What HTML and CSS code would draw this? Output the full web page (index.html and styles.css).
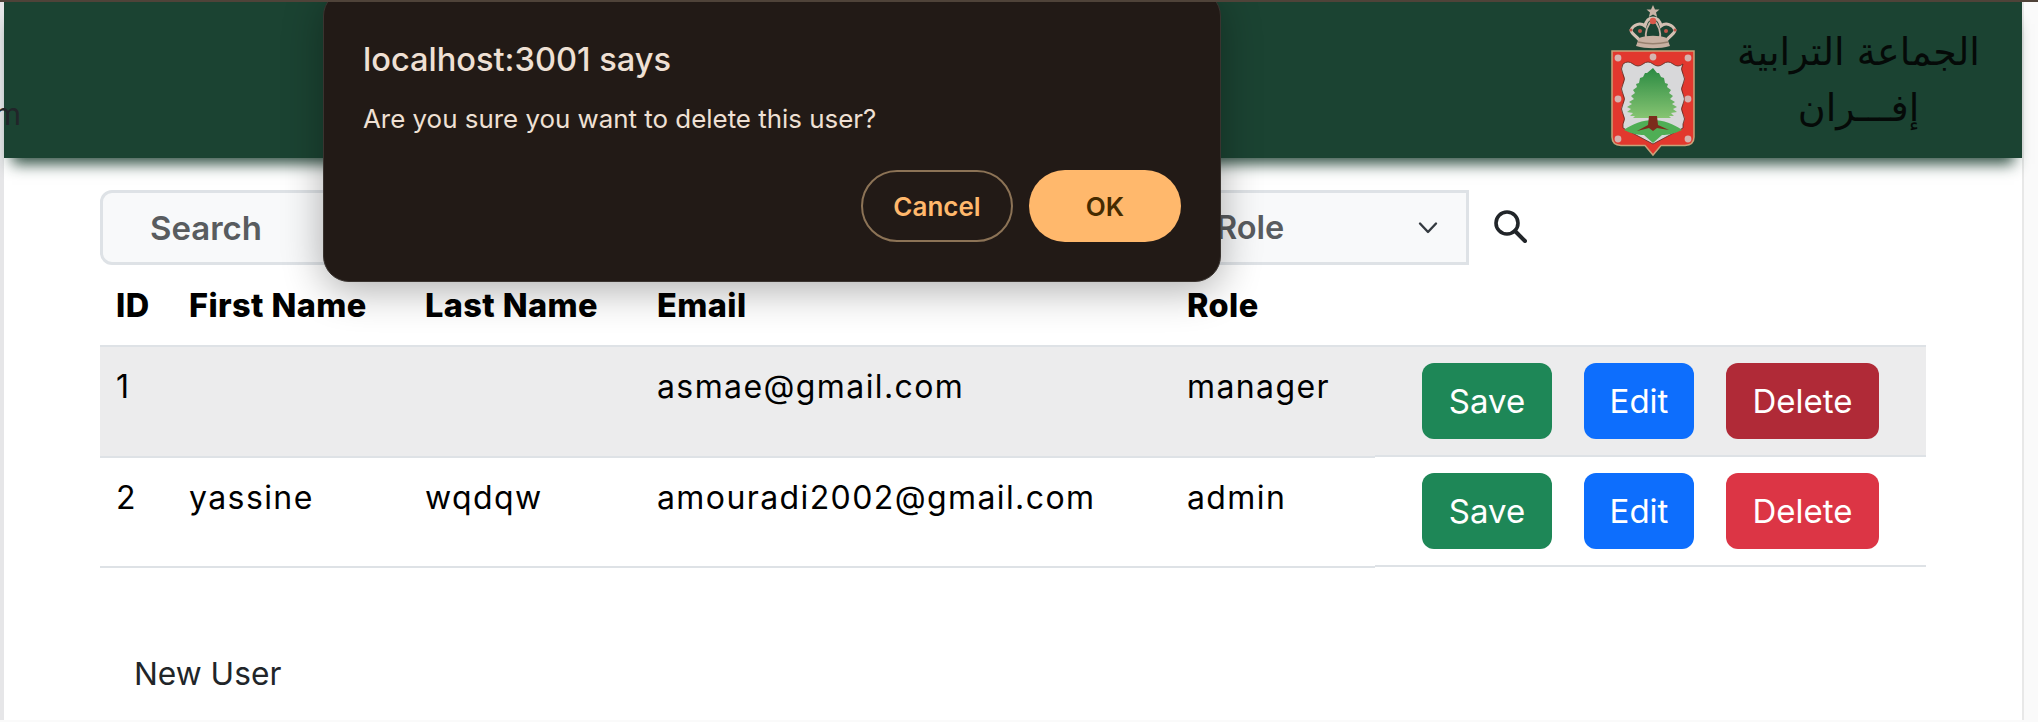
FILE: index.html
```html
<!DOCTYPE html>
<html lang="en">
<head>
<meta charset="utf-8">
<title>Users</title>
<link rel="stylesheet" href="styles.css">
</head>
<body>
<div class="page">
  <span class="clipped">m</span>
  <header class="header">
    <svg class="logo" width="90" height="155" viewBox="0 0 90 155" aria-hidden="true">
      <defs>
        <linearGradient id="tree" x1="0" y1="0" x2="0" y2="1">
          <stop offset="0" stop-color="#2a8a42"/>
          <stop offset="1" stop-color="#86c472"/>
        </linearGradient>
      </defs>
      <path d="M43 2l2 4.500h4.500l-3.500 3 1.200 4.500-4.200-2.500-4.200 2.500 1.200-4.500-3.500-3h4.500z" fill="#c9b3a6"/>
      <path d="M30 38C26 32 21 31 21 27c2-5 9-8 14-4 1-5 4-8 8-8s7 3 8 8c5-4 12-1 14 4 0 4-5 5-9 11" fill="none" stroke="#d3bfb2" stroke-width="3"/>
      <path d="M36 36c-1-6 1-14 7-20 6 6 8 14 7 20" fill="none" stroke="#c9b3a6" stroke-width="2"/>
      <path d="M29 35c8-3 20-3 28 0l3 8c-10 3-24 3-34 0z" fill="#c8b0a2"/>
      <path d="M28 39c9 2 21 2 30 0" fill="none" stroke="#97806f" stroke-width="1.500"/>
      <circle cx="43" cy="18" r="3.200" fill="#d9584a"/>
      <circle cx="30" cy="28" r="2" fill="#c2564a"/>
      <circle cx="56" cy="28" r="2" fill="#c2564a"/>
      <circle cx="21" cy="27" r="1.500" fill="#c2564a"/>
      <circle cx="65" cy="27" r="1.500" fill="#c2564a"/>
      <path d="M2 48H84V134Q84 142 75 142.500H51L43 152 35 142.500H11Q2 142 2 134Z" fill="#e2382e" stroke="#c8a27a" stroke-width="1.500"/>
      <path d="M13 61q5-4 10 0t10 0 10 0 10 0 10 0 10 0q-3 5 0 10t0 10 0 10 0 10 0 10 0 10V125L43 141 13 125V121q3-5 0-10t0-10 0-10 0-10 0-10 0-10z" fill="#d8d8da" stroke="#5a2a20" stroke-width=".8"/>
      <path d="M43 65l4 5 2 0 2 4 3 1 1 5 3 1-1 3 4 3-2 3 4 3-3 3 5 3-3 2 5 3-4 2 4 3-6 1 3 3-5 0 2 2H23l2-2-5 0 3-3-6-1 4-3-4-2 5-3-3-2 5-3-3-3 4-3-2-3 4-3-1-3 3-1 1-5 3-1 2-4 2 0z" fill="url(#tree)"/>
      <path d="M14 127c8-6 19-10 29-10s21 4 29 10c-8 4-14 5-20 5l-9 8-9-8c-6 0-12-1-20-5z" fill="#4fae55"/>
      <path d="M39 113h8l1 9 11 5-12-2-4 3-4-3-12 3 11-6z" fill="#7c2b1c"/>
      <g fill="#d6b4b0">
        <circle cx="8" cy="55" r="3.400"/><circle cx="43" cy="54" r="3.400"/><circle cx="78" cy="55" r="3.400"/>
        <circle cx="8" cy="96" r="3.400"/><circle cx="78" cy="96" r="3.400"/>
        <circle cx="8" cy="136" r="3.400"/><circle cx="78" cy="136" r="3.400"/>
      </g>
    </svg>
    <div class="brand" lang="ar" dir="rtl">
      <div class="brand-line">الجماعة الترابية</div>
      <div class="brand-line">إفـــران</div>
    </div>
  </header>

  <main class="main">
    <form class="filters">
      <div class="search-field">Search</div>
      <div class="role-field">
        <span>Role</span>
        <svg width="20" height="14" viewBox="0 0 20 14" aria-hidden="true"><path d="M2 2.500l8 8.500 8-8.500" fill="none" stroke="#343a40" stroke-width="2.400" stroke-linecap="round" stroke-linejoin="round"/></svg>
      </div>
      <svg class="search-icon" width="34" height="34" viewBox="0 0 34 34" aria-hidden="true"><circle cx="14" cy="14" r="11" fill="none" stroke="#212529" stroke-width="3.600"/><path d="M22 22l10 10" stroke="#212529" stroke-width="4" stroke-linecap="round"/></svg>
    </form>

    <table class="users">
      <colgroup>
        <col class="c-id"><col class="c-first"><col class="c-last"><col class="c-email"><col class="c-role"><col class="c-act">
      </colgroup>
      <thead>
        <tr><th>ID</th><th>First Name</th><th>Last Name</th><th>Email</th><th>Role</th><th></th></tr>
      </thead>
      <tbody>
        <tr class="hover">
          <td>1</td><td></td><td></td><td>asmae@gmail.com</td><td>manager</td>
          <td class="act"><div class="btns"><button type="button" class="btn save">Save</button><button type="button" class="btn edit">Edit</button><button type="button" class="btn del del-hover">Delete</button></div></td>
        </tr>
        <tr>
          <td>2</td><td>yassine</td><td>wqdqw</td><td>amouradi2002@gmail.com</td><td>admin</td>
          <td class="act"><div class="btns"><button type="button" class="btn save">Save</button><button type="button" class="btn edit">Edit</button><button type="button" class="btn del">Delete</button></div></td>
        </tr>
      </tbody>
    </table>

    <a class="new-user">New User</a>
  </main>

  <div class="dialog" role="alertdialog">
    <div class="dialog-title">localhost:3001 says</div>
    <div class="dialog-msg">Are you sure you want to delete this user?</div>
    <div class="dialog-actions">
      <button type="button" class="pill cancel">Cancel</button>
      <button type="button" class="pill ok">OK</button>
    </div>
  </div>
</div>
</body>
</html>
```
FILE: styles.css
```css
* { box-sizing: border-box; }
html, body { margin: 0; height: 100%; overflow: hidden; }
body {
  background: #fafafa;
  border-top: 2px solid #4f4339;
  font-family: Inter, "Liberation Sans", sans-serif;
  color: #000;
}
.page {
  position: relative;
  width: 2024px;
  height: 718px;
  background: #fff;
  border-left: 4px solid #e6e6e8;
  border-right: 2px solid #e8e8e8;
}
.clipped {
  position: absolute;
  left: -10px;
  top: 94px;
  font-size: 31px;
  line-height: 36px;
  color: #212529;
  z-index: 2;
}
.header {
  height: 156px;
  background: #1b4332;
  box-shadow: 0 14px 14px -8px rgba(24, 60, 46, .9);
  display: flex;
  justify-content: flex-end;
  align-items: flex-start;
  padding-right: 40px;
}
.logo { margin-top: 1px; margin-right: 35px; flex: none; }
.brand {
  width: 247px;
  margin-top: 22px;
  text-align: center;
  font-family: "DejaVu Sans", sans-serif;
  color: #050a08;
}
.brand-line { font-size: 38px; line-height: 56px; white-space: nowrap; }
.main { padding: 32px 0 0 96px; }
.filters { display: flex; align-items: center; height: 75px; }
.search-field, .role-field {
  height: 75px;
  background: #f8f9fa;
  border: 3px solid #dee2e6;
  display: flex;
  align-items: center;
  font-weight: 600;
  color: #595c5f;
}
.search-field {
  width: 1090px;
  font-size: 33px;
  border-radius: 12px 0 0 12px;
  padding-left: 47px;
}
.role-field {
  width: 279px;
  font-size: 32.5px;
  padding: 0 28px 0 23px;
  justify-content: space-between;
}
.search-icon { margin-left: 24px; margin-top: -3px; }
.users {
  width: 1826px;
  table-layout: fixed;
  border-collapse: separate;
  border-spacing: 0;
  font-size: 32px;
  letter-spacing: 1.4px;
}
.c-id { width: 73px; }
.c-first { width: 236px; }
.c-last { width: 232px; }
.c-email { width: 530px; }
.c-role { width: 204px; }
.c-act { width: 551px; }
.users th {
  height: 82px;
  padding: 0 16px;
  text-align: left;
  font-weight: 800;
  font-size: 32.5px;
  letter-spacing: .4px;
  border-bottom: 2px solid #dee2e6;
  vertical-align: middle;
}
.users td {
  padding: 19px 16px 0;
  line-height: 42px;
  vertical-align: top;
  border-bottom: 2px solid #dee2e6;
  white-space: nowrap;
}
.users td.act {
  padding: 16px 16px 18px 47px;
  border-bottom: 1px solid #fff;
  box-shadow: inset 0 -2px 0 #dee2e6;
}
.users tr + tr td.act { padding-top: 15px; }
.hover td { background: #ececed; }
.btns { display: flex; gap: 32px; }
.btn {
  height: 76px;
  border: 0;
  border-radius: 12px;
  color: #fff;
  font: 400 33px Inter, "Liberation Sans", sans-serif;
  padding: 0;
}
.save { width: 130px; background: #1e8757; }
.edit { width: 110px; background: #0d6efd; }
.del { width: 153px; background: #dc3545; }
.del-hover { background: #b02a37; }
.new-user {
  display: block;
  margin: 85px 0 0 34px;
  font-size: 31.7px;
  line-height: 42px;
  color: #212529;
}
.dialog {
  position: absolute;
  left: 319px;
  top: -12px;
  width: 898px;
  height: 292px;
  padding: 50px 39px 0;
  background: #221a16;
  border: 1px solid #3a3430;
  border-radius: 26px;
  box-shadow: 0 8px 40px rgba(0, 0, 0, .32);
  color: #efe0d4;
  z-index: 3;
}
.dialog-title { font-size: 32.6px; line-height: 36px; font-weight: 500; }
.dialog-msg { margin-top: 26px; font-size: 25.9px; line-height: 32px; }
.dialog-actions { display: flex; justify-content: flex-end; gap: 16px; margin-top: 35px; }
.pill {
  width: 152px;
  height: 72px;
  border-radius: 36px;
  font: 600 26px Inter, "Liberation Sans", sans-serif;
}
.cancel { background: transparent; border: 2px solid #8c7356; color: #ffb86c; }
.ok { background: #ffb86c; border: 0; color: #452b00; }
```
